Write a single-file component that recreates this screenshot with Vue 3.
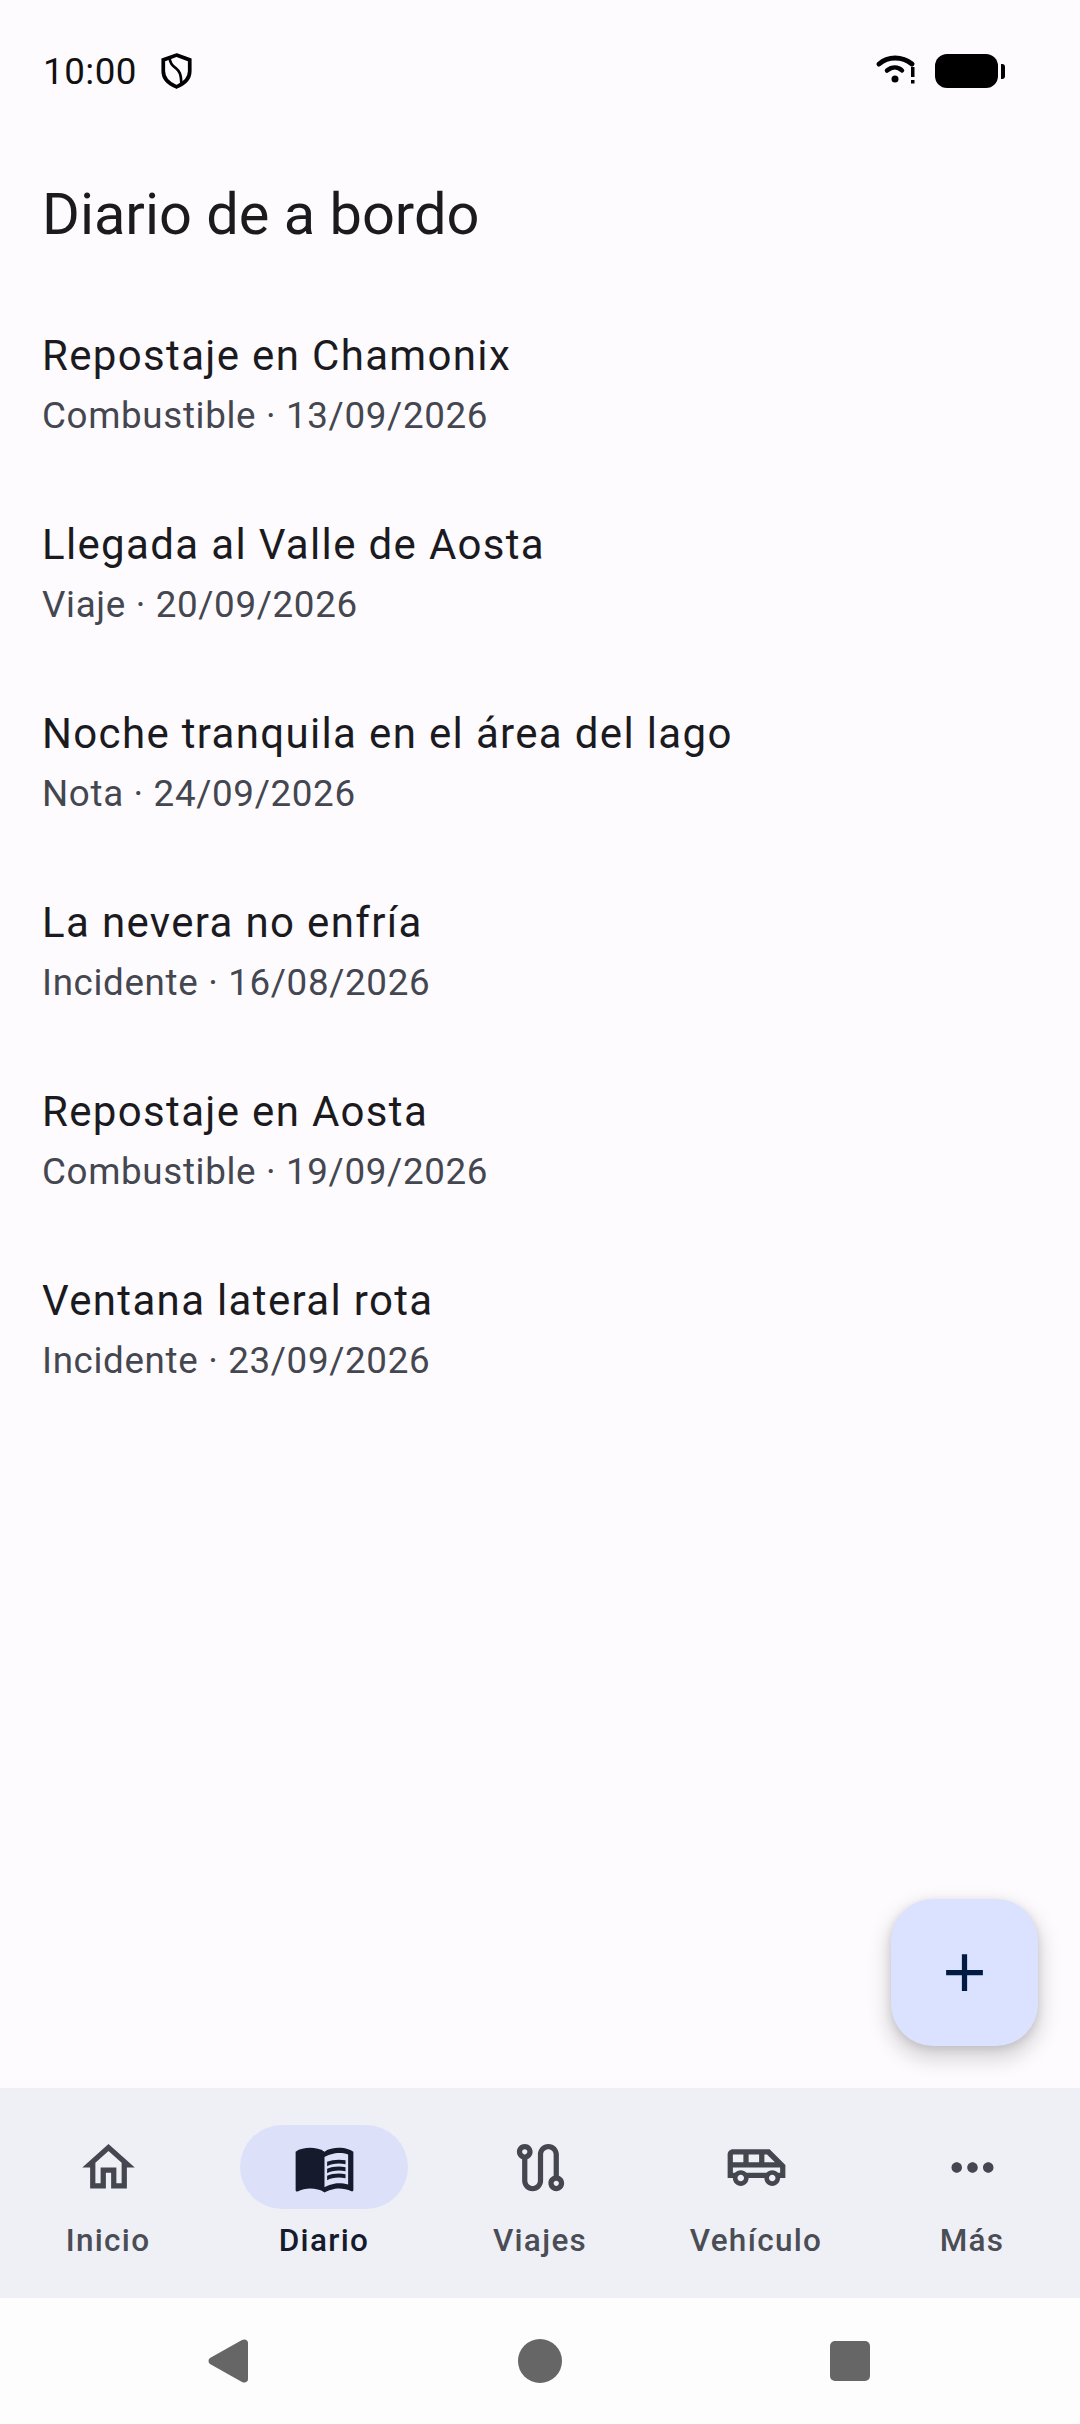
<template>
  <div class="screen">
    <div class="status-bar">
      <span class="clock">10:00</span>
      <svg class="shield" viewBox="0 0 29 34" fill="none" stroke="#000" stroke-width="3.500">
        <path d="M14.500 2 27 6.500V17c0 7-5 12-12.500 15C7 29 2 24 2 17V6.500Z" />
        <path d="M8 4c0 6 3 8 6 10.500s5 5 5 15" stroke-width="2.500" />
      </svg>
      <div class="status-right">
        <svg class="wifi" viewBox="0 0 40 28">
          <path d="M2 7C11-1 25-1 35 7" fill="none" stroke="#000" stroke-width="5" stroke-linecap="round" />
          <path d="M10 13.500c5-4 11-4 15 0" fill="none" stroke="#000" stroke-width="4.500" stroke-linecap="round" />
          <circle cx="18" cy="22" r="3.500" />
          <rect x="34" y="10" width="3.500" height="10" />
          <rect x="34" y="23" width="3.500" height="3.500" />
        </svg>
        <div class="battery"></div>
        <div class="battery-tip"></div>
      </div>
    </div>

    <h1 class="page-title">Diario de a bordo</h1>

    <ul class="entries">
      <li v-for="entry in entries" :key="entry.title" class="entry">
        <div class="entry-title">{{ entry.title }}</div>
        <div class="entry-meta">{{ entry.kind }} · {{ entry.date }}</div>
      </li>
    </ul>

    <button class="fab">
      <svg viewBox="0 0 24 24" width="63" height="63"><path d="M19 13h-6v6h-2v-6H5v-2h6V5h2v6h6v2z" /></svg>
    </button>

    <nav class="bottom-nav">
      <div v-for="tab in tabs" :key="tab.label" class="tab" :class="{ active: tab.active }">
        <div class="tab-icon">
          <svg viewBox="0 0 24 24" width="63" height="63"><path v-for="d in tab.paths" :key="d" :d="d" /></svg>
        </div>
        <span class="tab-label">{{ tab.label }}</span>
      </div>
    </nav>

    <div class="system-nav">
      <svg width="42" height="46" viewBox="0 0 42 46"><path d="M2 20 34 2c3-1.500 6 0 6 3v36c0 3-3 4.500-6 3L2 26c-2-1.500-2-4.500 0-6Z" /></svg>
      <div class="home-dot"></div>
      <div class="recents"></div>
    </div>
  </div>
</template>

<script setup>
const entries = [
  { title: 'Repostaje en Chamonix', kind: 'Combustible', date: '13/09/2026' },
  { title: 'Llegada al Valle de Aosta', kind: 'Viaje', date: '20/09/2026' },
  { title: 'Noche tranquila en el área del lago', kind: 'Nota', date: '24/09/2026' },
  { title: 'La nevera no enfría', kind: 'Incidente', date: '16/08/2026' },
  { title: 'Repostaje en Aosta', kind: 'Combustible', date: '19/09/2026' },
  { title: 'Ventana lateral rota', kind: 'Incidente', date: '23/09/2026' }
]

const tabs = [
  {
    label: 'Inicio',
    paths: ['M12 5.690l5 4.500V18h-2v-6H9v6H7v-7.810l5-4.500M12 3L2 12h3v8h6v-6h2v6h6v-8h3L12 3z']
  },
  {
    label: 'Diario',
    active: true,
    paths: [
      'M21 5c-1.110-.350-2.330-.500-3.500-.500-1.950 0-4.050.400-5.500 1.500-1.450-1.100-3.550-1.500-5.500-1.500S2.450 4.900 1 6v14.650c0 .250.250.500.500.500.100 0 .150-.050.250-.050C3.100 20.450 5.050 20 6.500 20c1.950 0 4.050.400 5.500 1.500 1.350-.850 3.800-1.500 5.500-1.500 1.650 0 3.350.300 4.750 1.050.100.050.150.050.250.050.250 0 .500-.250.500-.500V6c-.600-.450-1.250-.750-2-1zm0 13.500c-1.100-.350-2.300-.500-3.500-.500-1.700 0-4.150.650-5.500 1.500V8c1.350-.850 3.800-1.500 5.500-1.500 1.200 0 2.400.150 3.500.500v11.500z',
      'M17.500 10.500c.880 0 1.730.090 2.500.260V9.240c-.790-.150-1.640-.240-2.500-.240-1.700 0-3.240.290-4.500.830v1.660c1.130-.640 2.700-.990 4.500-.990zM13 12.490v1.660c1.130-.640 2.700-.990 4.500-.990.880 0 1.730.090 2.500.260V11.900c-.790-.150-1.640-.240-2.500-.240-1.700 0-3.240.300-4.500.830zM17.500 14.330c-1.700 0-3.240.290-4.500.830v1.660c1.130-.640 2.700-.990 4.500-.990.880 0 1.730.090 2.500.260v-1.520c-.790-.160-1.640-.240-2.500-.240z'
    ]
  },
  {
    label: 'Viajes',
    paths: ['M19 15.180V7c0-2.210-1.790-4-4-4s-4 1.790-4 4v10c0 1.100-.900 2-2 2s-2-.900-2-2V8.820C8.160 8.400 9 7.300 9 6c0-1.660-1.340-3-3-3S3 4.340 3 6c0 1.300.840 2.400 2 2.820V17c0 2.210 1.790 4 4 4s4-1.790 4-4V7c0-1.100.900-2 2-2s2 .900 2 2v8.180c-1.160.410-2 1.510-2 2.820 0 1.660 1.340 3 3 3s3-1.340 3-3c0-1.300-.840-2.400-2-2.820zM6 7c-.550 0-1-.450-1-1s.450-1 1-1 1 .450 1 1-.450 1-1 1zm12 12c-.550 0-1-.450-1-1s.450-1 1-1 1 .450 1 1-.450 1-1 1z']
  },
  {
    label: 'Vehículo',
    paths: ['M17 5H3c-1.100 0-2 .900-2 2v9h2c0 1.660 1.340 3 3 3s3-1.340 3-3h6c0 1.660 1.340 3 3 3s3-1.340 3-3h2v-5l-6-6zm-2 2h1l3 3h-4V7zM9 7h4v3H9V7zM3 7h4v3H3V7zm3 10.250c-.690 0-1.250-.560-1.250-1.250s.560-1.250 1.250-1.250 1.250.560 1.250 1.250-.560 1.250-1.250 1.250zm12 0c-.690 0-1.250-.560-1.250-1.250s.560-1.250 1.250-1.250 1.250.560 1.250 1.250-.560 1.250-1.250 1.250zM21 14h-.780c-.550-.610-1.340-1-2.220-1s-1.670.390-2.220 1H8.220c-.550-.610-1.340-1-2.220-1s-1.670.390-2.220 1H3v-2h18v2z']
  },
  {
    label: 'Más',
    paths: ['M6 10c-1.100 0-2 .900-2 2s.900 2 2 2 2-.900 2-2-.900-2-2-2zm12 0c-1.100 0-2 .900-2 2s.900 2 2 2 2-.900 2-2-.900-2-2-2zm-6 0c-1.100 0-2 .900-2 2s.900 2 2 2 2-.900 2-2-.900-2-2-2z']
  }
]
</script>

<style scoped>
.screen {
  position: relative;
  display: flex;
  flex-direction: column;
  width: 1080px;
  height: 2424px;
  overflow: hidden;
  background: #fefbff;
  font-family: Roboto, "Liberation Sans", sans-serif;
}

.status-bar {
  display: flex;
  align-items: center;
  height: 142px;
  padding: 0 75px 0 43px;
  box-sizing: border-box;
}
.clock {
  font-size: 36.750px;
  letter-spacing: 0.500px;
  color: #111;
}
.shield {
  width: 31px;
  height: 36px;
  margin-left: 24px;
}
.status-right {
  display: flex;
  align-items: center;
  margin-left: auto;
}
.wifi {
  width: 40px;
  height: 28px;
  margin-right: 18px;
  overflow: visible;
}
.battery {
  width: 63px;
  height: 34px;
  border-radius: 12px;
  background: #000;
}
.battery-tip {
  width: 4px;
  height: 15px;
  margin-left: 3px;
  border-radius: 0 3px 3px 0;
  background: #000;
}

.page-title {
  margin: 0;
  padding: 0 42px;
  font-size: 57.750px;
  line-height: 144px;
  font-weight: 400;
  color: #1b1b1f;
}

.entries {
  margin: 0;
  padding: 0;
  list-style: none;
}
.entry {
  height: 189px;
  padding: 38px 42px 0;
  box-sizing: border-box;
}
.entry-title {
  font-size: 42px;
  line-height: 63px;
  letter-spacing: 1.340px;
  color: #1b1b1f;
}
.entry-meta {
  margin-top: 3px;
  font-size: 36.750px;
  line-height: 52.500px;
  letter-spacing: 0.656px;
  color: #44474f;
}

.fab {
  position: absolute;
  top: 1899px;
  right: 42px;
  display: flex;
  align-items: center;
  justify-content: center;
  width: 147px;
  height: 147px;
  padding: 0;
  border: none;
  border-radius: 42px;
  background: #dae2ff;
  box-shadow: 0 10px 20px 4px rgba(0, 0, 0, 0.15), 0 3px 8px rgba(0, 0, 0, 0.12);
}
.fab svg {
  fill: #001a41;
}

.bottom-nav {
  display: grid;
  grid-template-columns: repeat(5, 216px);
  height: 210px;
  margin-top: auto;
  background: #eff0f6;
}
.tab {
  display: flex;
  flex-direction: column;
  align-items: center;
  padding-top: 37px;
}
.tab-icon {
  display: flex;
  align-items: center;
  justify-content: center;
  width: 168px;
  height: 84px;
  border-radius: 42px;
}
.tab-icon svg {
  fill: #44474f;
}
.tab-label {
  margin-top: 11px;
  font-size: 31.500px;
  line-height: 42px;
  font-weight: 500;
  letter-spacing: 1.310px;
  color: #4a4d55;
}
.tab.active .tab-icon {
  background: #dce1f9;
}
.tab.active .tab-icon svg {
  fill: #151b2c;
}
.tab.active .tab-label {
  color: #151b2c;
}

.system-nav {
  display: grid;
  grid-template-columns: 42px 44px 40px;
  justify-content: space-between;
  align-items: center;
  height: 126px;
  padding: 0 210px 0 208px;
  background: #fdfdfe;
}
.system-nav svg {
  fill: #666;
}
.home-dot {
  height: 44px;
  border-radius: 50%;
  background: #666;
}
.recents {
  height: 40px;
  border-radius: 5px;
  background: #666;
}
</style>
